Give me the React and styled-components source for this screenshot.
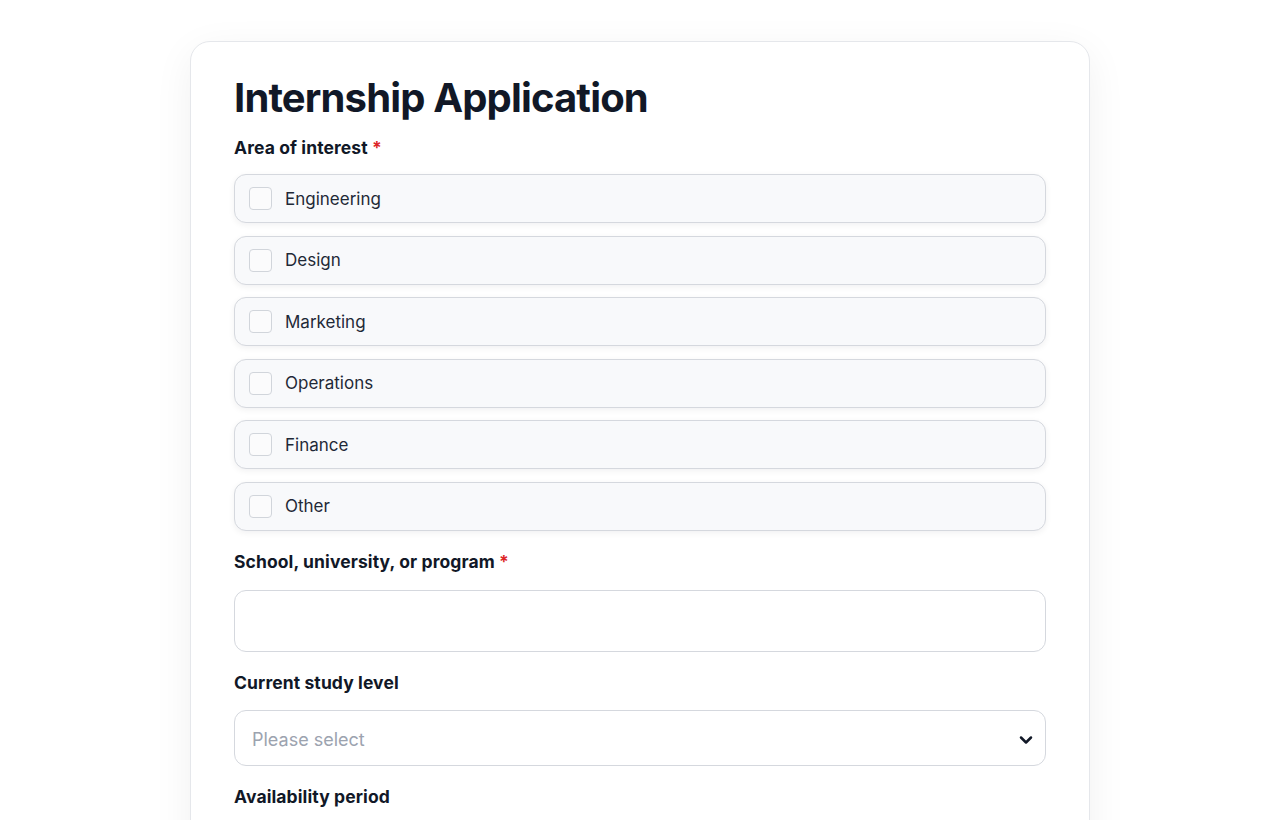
import styled, { createGlobalStyle } from "styled-components";
import { ChevronDown } from "lucide-react";

const areas = ["Engineering", "Design", "Marketing", "Operations", "Finance", "Other"];

const GlobalStyle = createGlobalStyle`
  * { box-sizing: border-box; }
  html, body {
    margin: 0;
    background: #ffffff;
    font-family: Inter, "Noto Sans", sans-serif;
    color: #111827;
  }
`;

const Page = styled.div`
  display: flex;
  justify-content: center;
  padding-top: 41px;
  height: 820px;
  overflow: hidden;
`;

const Card = styled.div`
  width: 900px;
  background: #fff;
  border: 1px solid #e5e7eb;
  border-radius: 20px;
  box-shadow: 0 10px 40px rgba(17, 24, 39, 0.06);
  padding: 32px 43px 40px;
  display: flex;
  flex-direction: column;
  height: 900px;
`;

const Title = styled.h1`
  margin: 0;
  font-size: 40px;
  line-height: 48px;
  font-weight: 700;
  letter-spacing: -0.85px;
  color: #111827;
`;

const Label = styled.div`
  font-size: 17.5px;
  line-height: 24px;
  font-weight: 700;
  letter-spacing: 0.1px;
  color: #111827;
  margin-top: ${(p) => p.$top || 19}px;
  margin-bottom: ${(p) => p.$bottom || 15}px;
`;

const Star = styled.span`
  color: #dc2626;
`;

const OptionList = styled.div`
  display: flex;
  flex-direction: column;
  gap: 12.6px;
`;

const OptionRow = styled.label`
  height: 49px;
  display: flex;
  align-items: center;
  gap: 13px;
  padding: 0 14px;
  background: #f8f9fb;
  border: 1px solid #d5d8de;
  border-radius: 12px;
  box-shadow: 0 2px 6px rgba(17, 24, 39, 0.06);
  font-size: 17px;
  color: #1f2937;
  cursor: pointer;
`;

const Box = styled.span`
  width: 23px;
  height: 23px;
  border: 1px solid #d1d5db;
  border-radius: 4px;
  background: #fbfbfc;
`;

const TextInput = styled.input`
  height: 62px;
  width: 100%;
  border: 1px solid #d5d8de;
  border-radius: 12px;
  padding: 0 17px;
  font-size: 18px;
  font-family: inherit;
  outline: none;
  background: #fff;
`;

const Select = styled.div`
  height: 56px;
  display: flex;
  align-items: center;
  justify-content: space-between;
  border: 1px solid #d5d8de;
  border-radius: 12px;
  padding: 4px 9px 0 17px;
  font-size: 18px;
  color: #9ca3af;
  background: #fff;
`;

const App = () => {
  return (
    <>
      <GlobalStyle />
      <Page>
        <Card>
          <Title>Internship Application</Title>
          <Label $top={14} $bottom={14}>
            Area of interest <Star>*</Star>
          </Label>
          <OptionList>
            {areas.map((a) => (
              <OptionRow key={a}>
                <Box />
                {a}
              </OptionRow>
            ))}
          </OptionList>
          <Label $bottom={16}>
            School, university, or program <Star>*</Star>
          </Label>
          <TextInput />
          <Label>Current study level</Label>
          <Select>
            Please select
            <ChevronDown size={20} strokeWidth={3} color="#111827" />
          </Select>
          <Label>Availability period</Label>
        </Card>
      </Page>
    </>
  );
};

export default App;
